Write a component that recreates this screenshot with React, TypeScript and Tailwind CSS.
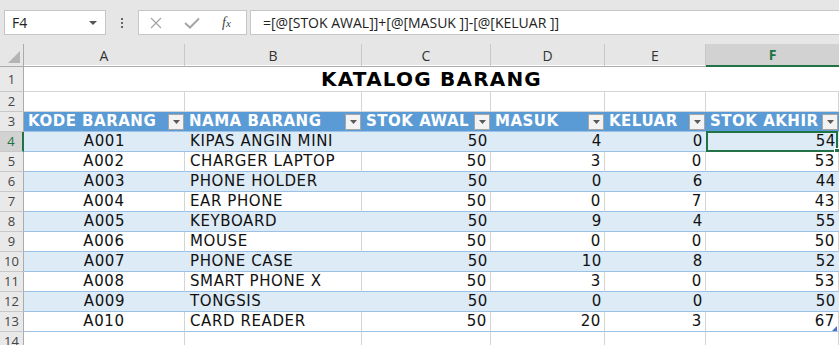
import React from 'react';

type Item = { kode: string; nama: string; awal: number; masuk: number; keluar: number; akhir: number };

const items: Item[] = [
  { kode: 'A001', nama: 'KIPAS ANGIN MINI', awal: 50, masuk: 4, keluar: 0, akhir: 54 },
  { kode: 'A002', nama: 'CHARGER LAPTOP', awal: 50, masuk: 3, keluar: 0, akhir: 53 },
  { kode: 'A003', nama: 'PHONE HOLDER', awal: 50, masuk: 0, keluar: 6, akhir: 44 },
  { kode: 'A004', nama: 'EAR PHONE', awal: 50, masuk: 0, keluar: 7, akhir: 43 },
  { kode: 'A005', nama: 'KEYBOARD', awal: 50, masuk: 9, keluar: 4, akhir: 55 },
  { kode: 'A006', nama: 'MOUSE', awal: 50, masuk: 0, keluar: 0, akhir: 50 },
  { kode: 'A007', nama: 'PHONE CASE', awal: 50, masuk: 10, keluar: 8, akhir: 52 },
  { kode: 'A008', nama: 'SMART PHONE X', awal: 50, masuk: 3, keluar: 0, akhir: 53 },
  { kode: 'A009', nama: 'TONGSIS', awal: 50, masuk: 0, keluar: 0, akhir: 50 },
  { kode: 'A010', nama: 'CARD READER', awal: 50, masuk: 20, keluar: 3, akhir: 67 },
];

const cols = 'grid grid-cols-[24px_161px_177px_129px_114px_101px_133px]';
const letters = ['A', 'B', 'C', 'D', 'E', 'F'];
const headers = ['KODE BARANG', 'NAMA BARANG', 'STOK AWAL', 'MASUK', 'KELUAR', 'STOK AKHIR'];

const FilterButton = () => (
  <div className="absolute right-[1px] top-[2px] w-[16px] h-[16px] bg-[#f3f3f3] border border-[#a6a6a6] flex items-center justify-center">
    <svg width="7" height="4" viewBox="0 0 7 4">
      <path d="M0 0 H7 L3.5 4 Z" fill="#595959" />
    </svg>
  </div>
);

const RowNum = ({ n, active }: { n: number; active?: boolean }) => (
  <div
    className={`h-[20px] flex items-center justify-center text-[13px] tracking-normal font-['Open_Sans',sans-serif] border-b border-[#c8c8c8] ${
      active
        ? 'bg-[#d2d2d2] text-[#217346] border-r-2 border-r-[#217346]'
        : 'bg-[#e9e9e9] text-[#444] border-r border-r-[#ababab]'
    }`}
  >
    {n}
  </div>
);

export default function App() {
  return (
    <div className="w-[839px] h-[345px] overflow-hidden bg-white text-[#000] font-['Open_Sans',sans-serif] select-none">
      {/* formula bar */}
      <div className="h-[44px] bg-[#e6e6e6] flex items-start pt-[10px] pl-[4px]">
        <div className="w-[102px] h-[25px] bg-white border border-[#c6c6c6] flex items-center justify-between pl-[7px] pr-[8px] text-[14px] text-[#222]">
          <span>F4</span>
          <svg width="8" height="4" viewBox="0 0 8 4">
            <path d="M0 0 H8 L4 4 Z" fill="#555" />
          </svg>
        </div>
        <div className="w-[32px] h-[25px] flex flex-col items-center justify-center gap-[2px]">
          <span className="w-[2px] h-[2px] bg-[#666]" />
          <span className="w-[2px] h-[2px] bg-[#666]" />
          <span className="w-[2px] h-[2px] bg-[#666]" />
        </div>
        <div className="w-[109px] h-[25px] bg-white border border-[#c6c6c6] flex items-center">
          <svg width="14" height="14" viewBox="0 0 14 14" className="ml-[10px]">
            <path d="M2 2 L12 12 M12 2 L2 12" stroke="#a6a6a6" strokeWidth="1.3" />
          </svg>
          <svg width="16" height="14" viewBox="0 0 16 14" className="ml-[21px]">
            <path d="M1 7 L6 11.5 L15 2.5" stroke="#a6a6a6" strokeWidth="2" fill="none" />
          </svg>
          <span className="ml-[22px] text-[14px] italic text-[#444] font-['Liberation_Serif',serif]">
            f<span className="text-[11px]">x</span>
          </span>
        </div>
        <div className="ml-[3px] flex-1 h-[25px] bg-white border border-[#c6c6c6] border-r-0 flex items-center pl-[12px] text-[14px] text-[#222] whitespace-pre">
          =[@[STOK AWAL]]+[@[MASUK ]]-[@[KELUAR ]]
        </div>
      </div>

      {/* column headers */}
      <div className={`${cols} h-[21px] bg-[#e6e6e6] text-[14px] text-[#333]`}>
        <div className="relative border-r border-b border-[#ababab]">
          <svg width="12" height="12" viewBox="0 0 12 12" className="absolute right-[3px] bottom-[3px]">
            <path d="M12 0 V12 H0 Z" fill="#b4b4b4" />
          </svg>
        </div>
        {letters.map((l) =>
          l === 'F' ? (
            <div key={l} className="flex items-center justify-center bg-[#d2d2d2] border-b-2 border-[#217346] text-[#217346] font-bold">
              {l}
            </div>
          ) : (
            <div key={l} className="flex items-center justify-center border-r border-b border-r-[#c8c8c8] border-b-[#ababab]">
              {l}
            </div>
          )
        )}
      </div>

      {/* row 1: title */}
      <div className={cols}>
        <div className="h-[27px] flex items-end justify-center pb-[2px] bg-[#e9e9e9] text-[#444] text-[13px] border-r border-b border-r-[#ababab] border-b-[#c8c8c8]">
          1
        </div>
        <div className="col-span-6 h-[27px] flex items-center justify-center border-b border-[#d4d4d4] font-['DejaVu_Sans',sans-serif] font-bold text-[20px] tracking-[1.2px] pt-[1px]">
          KATALOG BARANG
        </div>
      </div>

      {/* row 2 */}
      <div className={cols}>
        <RowNum n={2} />
        {letters.map((l) => (
          <div key={l} className="h-[20px] border-r border-b border-[#d4d4d4]" />
        ))}
      </div>

      {/* row 3: table header */}
      <div className={`${cols} font-['DejaVu_Sans',sans-serif]`}>
        <RowNum n={3} />
        {headers.map((h) => (
          <div key={h} className="relative h-[20px] bg-[#5b9bd5] text-white font-bold text-[15px] tracking-[0.5px] pl-[4px] flex items-center border-b border-[#9bc2e6] whitespace-nowrap overflow-hidden">
            {h}
            <FilterButton />
          </div>
        ))}
      </div>

      {/* data rows */}
      {items.map((it, i) => {
        const band = i % 2 === 0;
        const cell = `h-[20px] flex items-center border-b border-b-[#9bc2e6] whitespace-nowrap ${
          band ? 'bg-[#ddebf7]' : 'bg-white border-r border-r-[#d4d4d4]'
        }`;
        return (
          <div key={it.kode} className={`${cols} font-['DejaVu_Sans',sans-serif] text-[15px] tracking-[0.6px] text-[#111]`}>
            <RowNum n={i + 4} active={i === 0} />
            <div className={`${cell} justify-center`}>{it.kode}</div>
            <div className={`${cell} pl-[5px]`}>{it.nama}</div>
            <div className={`${cell} justify-end pr-[3px]`}>{it.awal}</div>
            <div className={`${cell} justify-end pr-[3px]`}>{it.masuk}</div>
            <div className={`${cell} justify-end pr-[3px]`}>{it.keluar}</div>
            <div className={`${cell} relative justify-end pr-[3px]`}>
              {it.akhir}
              {i === 0 && (
                <div className="absolute left-0 top-[-1px] right-[1px] bottom-[-1px] border-2 border-[#217346]">
                  <div className="absolute right-[-4px] bottom-[-4px] w-[6px] h-[6px] bg-[#217346] border border-white" />
                </div>
              )}
              {i === items.length - 1 && (
                <svg width="5" height="5" viewBox="0 0 5 5" className="absolute right-[1px] bottom-0">
                  <path d="M5 0 V5 H0 Z" fill="#4472c4" />
                </svg>
              )}
            </div>
          </div>
        );
      })}

      {/* row 14 */}
      <div className={cols}>
        <RowNum n={14} />
        {letters.map((l) => (
          <div key={l} className="h-[20px] border-r border-b border-[#d4d4d4]" />
        ))}
      </div>
    </div>
  );
}
